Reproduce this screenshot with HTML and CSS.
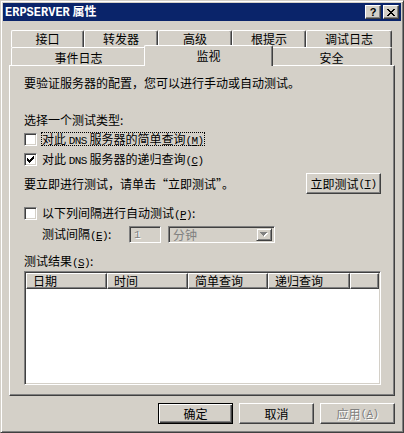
FILE: index.html
```html
<!DOCTYPE html>
<html lang="zh-CN">
<head>
<meta charset="utf-8">
<title>ERPSERVER 属性</title>
<link rel="stylesheet" href="styles.css">
</head>
<body>
<div class="window">
  <div class="titlebar">
    <span class="title"><span class="tlat">ERPSERVER</span> 属性</span>
    <div class="tbtns">
      <span class="tbtn help">?</span>
      <span class="tbtn"><svg width="8" height="7" viewBox="0 0 8 7" shape-rendering="crispEdges"><path d="M0 0h2v1h-2z M6 0h2v1h-2z M1 1h2v1h-2z M5 1h2v1h-2z M2 2h4v1h-4z M3 3h2v1h-2z M2 4h4v1h-4z M1 5h2v1h-2z M5 5h2v1h-2z M0 6h2v1h-2z M6 6h2v1h-2z" fill="#000"/></svg></span>
    </div>
  </div>

  <div class="tabs">
    <div class="tabrow back">
      <div class="tab t73">接口</div>
      <div class="tab t74">转发器</div>
      <div class="tab t74">高级</div>
      <div class="tab t74">根提示</div>
      <div class="tab t86">调试日志</div>
    </div>
    <div class="tabrow front">
      <div class="tab t135">事件日志</div>
      <div class="tab t125 selected">监视</div>
      <div class="tab t121">安全</div>
    </div>
  </div>

  <div class="panel">
    <p class="line intro">要验证服务器的配置，您可以进行手动或自动测试。</p>
    <p class="line choose">选择一个测试类型:</p>
    <div class="check first">
      <span class="box"></span>
      <span class="clabel focus">对此 <span class="lat">DNS</span> 服务器的简单查询<span class="lat">(<u>M</u>)</span></span>
    </div>
    <div class="check">
      <span class="box"><svg width="7" height="7" viewBox="0 0 7 7" shape-rendering="crispEdges"><path d="M6 0h1v1h-1z M5 1h2v1h-2z M0 2h1v1h-1z M4 2h3v1h-3z M0 3h2v1h-2z M3 3h3v1h-3z M0 4h5v1h-5z M1 5h3v1h-3z M2 6h1v1h-1z" fill="#000"/></svg></span>
      <span class="clabel">对此 <span class="lat">DNS</span> 服务器的递归查询<span class="lat">(<u>C</u>)</span></span>
    </div>
    <div class="nowrow">
      <span>要立即进行测试，请单击“立即测试”。</span>
      <button class="btn">立即测试<span class="lat">(<u>T</u>)</span></button>
    </div>
    <div class="check auto">
      <span class="box"></span>
      <span class="clabel">以下列间隔进行自动测试<span class="lat">(<u>P</u>)</span>:</span>
    </div>
    <div class="interval">
      <span class="ilabel">测试间隔<span class="lat">(<u>E</u>)</span>:</span>
      <span class="spin"><span class="lat">1</span></span>
      <span class="combo">
        <span class="cval">分钟</span>
        <span class="carrow"><svg width="8" height="5" viewBox="0 0 8 5" shape-rendering="crispEdges"><path d="M1 1h7v1h-7z M2 2h5v1h-5z M3 3h3v1h-3z M4 4h1v1h-1z" fill="#fff"/><path d="M0 0h7v1h-7z M1 1h5v1h-5z M2 2h3v1h-3z M3 3h1v1h-1z" fill="#808080"/></svg></span>
      </span>
    </div>
    <p class="line results">测试结果<span class="lat">(<u>S</u>)</span>:</p>
    <div class="list">
      <div class="lhead">
        <span class="hcell c1">日期</span>
        <span class="hcell c2">时间</span>
        <span class="hcell c3">简单查询</span>
        <span class="hcell c4">递归查询</span>
        <span class="hcell c5"></span>
      </div>
    </div>
  </div>

  <div class="buttons">
    <button class="btn default">确定</button>
    <button class="btn">取消</button>
    <button class="btn disabled">应用<span class="lat">(<u>A</u>)</span></button>
  </div>
</div>
</body>
</html>
```

FILE: styles.css
```css
* { box-sizing: border-box; }
html, body { margin: 0; padding: 0; }
body {
  background: #d4d0c8;
  font-family: "Noto Sans CJK SC", sans-serif;
  font-size: 12px;
  line-height: 16px;
  color: #000;
}
.lat {
  font-family: "Liberation Mono", monospace;
  font-size: 11px;
  letter-spacing: -0.6px;
}
.window {
  width: 404px;
  height: 433px;
  border: 1px solid;
  border-color: #d4d0c8 #404040 #404040 #d4d0c8;
  box-shadow: inset 1px 1px #fff, inset -1px -1px #808080;
  padding: 2px;
  display: flex;
  flex-direction: column;
}
.titlebar {
  height: 18px;
  background: #0a246a;
  color: #fff;
  display: flex;
  align-items: center;
  justify-content: space-between;
  padding-left: 2px;
  font-weight: bold;
}
.tlat {
  font-family: "Liberation Mono", monospace;
  font-size: 12px;
  font-weight: bold;
}
.tbtns { display: flex; gap: 2px; margin-right: 2px; }
.tbtn {
  width: 16px;
  height: 14px;
  background: #d4d0c8;
  border: 1px solid;
  border-color: #fff #404040 #404040 #fff;
  box-shadow: inset -1px -1px #808080;
  display: flex;
  align-items: center;
  justify-content: center;
  color: #000;
}
.tbtn.help {
  font-family: "Liberation Sans", sans-serif;
  font-size: 11px;
  font-weight: bold;
  line-height: 12px;
}

.tabs { margin: 9px 0 0 8px; width: 381px; }
.tabrow { display: flex; }
.tabrow.back { height: 17px; }
.tabrow.front { height: 18px; align-items: flex-end; }
.tab {
  flex: none;
  text-align: center;
  background: #d4d0c8;
  border-top: 1px solid #fff;
  border-left: 1px solid #fff;
  border-right: 1px solid #404040;
  box-shadow: inset -1px 0 #808080;
  border-radius: 2px 2px 0 0;
  padding-top: 2px;
  line-height: 15px;
}
.back .tab { height: 17px; padding-top: 0; line-height: 15px; }
.front .tab { height: 18px; }
.t73 { width: 73px; }
.t74 { width: 74px; }
.t86 { width: 86px; }
.t135 { width: 135px; }
.t125 { width: 125px; }
.t121 { width: 121px; }
.front .tab.selected {
  width: 129px;
  height: 21px;
  margin: 0 -2px -1px -2px;
  position: relative;
  z-index: 1;
}

.panel {
  margin: 0 6px;
  height: 331px;
  border: 1px solid;
  border-color: #fff #404040 #404040 #fff;
  box-shadow: inset -1px -1px #808080;
  padding: 9px 0 0 14px;
}
.line { margin: 0; height: 16px; }
.choose { margin-top: 21px; }
.results { margin-top: 10px; }

.check { display: flex; align-items: center; height: 20px; }
.check.first { margin-top: 1px; }
.check.auto { margin-top: 9px; }
.box {
  width: 13px;
  height: 13px;
  flex: none;
  background: #fff;
  border: 1px solid;
  border-color: #808080 #fff #fff #808080;
  box-shadow: inset 1px 1px #404040, inset -1px -1px #d4d0c8;
  display: flex;
  align-items: center;
  justify-content: center;
  margin-right: 4px;
}
.clabel {
  border: 1px solid transparent;
  line-height: 12px;
  height: 14px;
  padding-right: 1px;
}
.clabel.focus { border: 1px dotted #000; }

.nowrow {
  margin-top: 4px;
  height: 21px;
  margin-right: 13px;
  display: flex;
  align-items: center;
  justify-content: space-between;
}

.btn {
  font-family: inherit;
  font-size: 12px;
  line-height: 16px;
  color: #000;
  width: 75px;
  height: 21px;
  padding: 0;
  background: #d4d0c8;
  border: 1px solid;
  border-color: #fff #404040 #404040 #fff;
  box-shadow: inset -1px -1px #808080;
  display: flex;
  align-items: center;
  justify-content: center;
}
.btn.default {
  border-color: #000;
  box-shadow: inset 1px 1px #fff, inset -1px -1px #404040, inset -2px -2px #808080;
}
.btn.disabled { color: #808080; text-shadow: 1px 1px #fff; }

.interval {
  margin-top: 3px;
  height: 17px;
  padding-left: 18px;
  display: flex;
  align-items: center;
}
.ilabel { width: 87px; flex: none; }
.spin, .combo {
  height: 17px;
  border: 1px solid;
  border-color: #808080 #fff #fff #808080;
  box-shadow: inset 1px 1px #404040, inset -1px -1px #d4d0c8;
  background: #d4d0c8;
  color: #808080;
  display: flex;
  align-items: center;
}
.spin { width: 32px; padding-left: 4px; text-shadow: 1px 1px #fff; }
.combo { width: 107px; margin-left: 7px; justify-content: space-between; padding: 2px; }
.cval { padding-left: 2px; line-height: 13px; }
.carrow {
  width: 16px;
  height: 13px;
  border: 1px solid;
  border-color: #d4d0c8 #404040 #404040 #d4d0c8;
  box-shadow: inset 1px 1px #fff, inset -1px -1px #808080;
  display: flex;
  align-items: center;
  justify-content: center;
}

.list {
  margin-top: 2px;
  width: 357px;
  height: 114px;
  background: #fff;
  border: 1px solid;
  border-color: #808080 #fff #fff #808080;
  box-shadow: inset 1px 1px #404040, inset -1px -1px #d4d0c8;
  padding: 1px;
}
.lhead { display: flex; height: 16px; }
.hcell {
  flex: none;
  height: 16px;
  background: #d4d0c8;
  border: 1px solid;
  border-color: #fff #404040 #404040 #fff;
  box-shadow: inset -1px -1px #808080;
  padding-left: 6px;
  line-height: 13px;
}
.c1 { width: 81px; }
.c2 { width: 81px; }
.c3 { width: 80px; }
.c4 { width: 82px; }
.c5 { flex: 1; }

.buttons {
  margin: 7px 6px 0 0;
  display: flex;
  justify-content: flex-end;
  gap: 6px;
}
```
